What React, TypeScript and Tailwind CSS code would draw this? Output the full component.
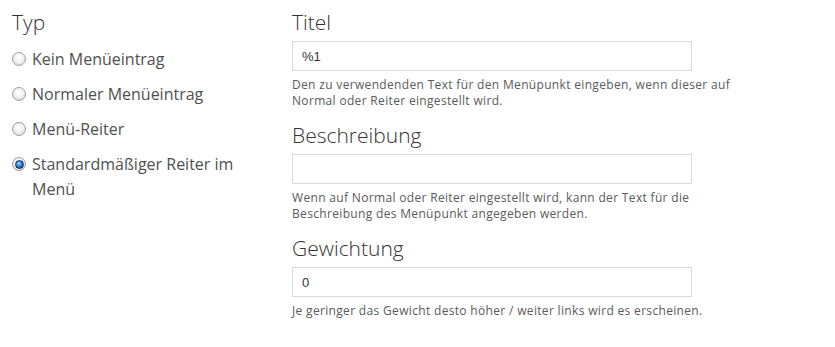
const TYPES = [
  { label: "Kein Menüeintrag", checked: false },
  { label: "Normaler Menüeintrag", checked: false },
  { label: "Menü-Reiter", checked: false },
  { label: "Standardmäßiger Reiter im Menü", checked: true },
];

const FIELDS = [
  {
    title: "Titel",
    value: "%1",
    help: ["Den zu verwendenden Text für den Menüpunkt eingeben, wenn dieser auf", "Normal oder Reiter eingestellt wird."],
  },
  {
    title: "Beschreibung",
    value: "",
    help: ["Wenn auf Normal oder Reiter eingestellt wird, kann der Text für die", "Beschreibung des Menüpunkt angegeben werden."],
  },
  {
    title: "Gewichtung",
    value: "0",
    help: ["Je geringer das Gewicht desto höher / weiter links wird es erscheinen."],
  },
];

function Radio({ checked }: { checked: boolean }) {
  return (
    <span className="mt-[5px] flex h-[14px] w-[14px] shrink-0 items-center justify-center rounded-full border border-[#a0a0a0] bg-[radial-gradient(circle_at_50%_40%,#ffffff_0%,#f2f2f2_45%,#cfcfcf_100%)]">
      {checked && (
        <span className="h-[9px] w-[9px] rounded-full border border-[#0b2a55] bg-[radial-gradient(circle_at_40%_35%,#9ad6ff_0%,#1f73d6_55%,#0a3a86_100%)]" />
      )}
    </span>
  );
}

export default function App() {
  return (
    <div className="flex min-h-[347px] w-[835px] bg-white font-['Open_Sans',sans-serif]">
      {/* Typ */}
      <div className="w-[280px] shrink-0 pl-[12px] pt-[7px]">
        <h2 className="text-[21px] font-light leading-[30px] text-[#333]">Typ</h2>
        <div className="mt-[10px] flex flex-col gap-[10px]">
          {TYPES.map((t) => (
            <label key={t.label} className="flex gap-[6px] text-[16px] leading-[25px] text-[#505050]">
              <Radio checked={t.checked} />
              <span className="w-[230px]">{t.label}</span>
            </label>
          ))}
        </div>
      </div>

      {/* Fields */}
      <div className="pl-[12px] pt-[7px]">
        {FIELDS.map((f) => (
          <div key={f.title} className="mb-[11px]">
            <h2 className="text-[21px] font-light leading-[30px] text-[#333]">{f.title}</h2>
            <input
              readOnly
              value={f.value}
              className="mt-[4px] block h-[30px] w-[400px] border border-[#d9d9d9] bg-white px-[9px] font-['Liberation_Sans',sans-serif] text-[13px] text-[#333] outline-none"
            />
            <p className="mt-[6px] text-[12px] leading-[16px] tracking-[0.33px] text-[#5a5a5a]">
              {f.help.map((h) => (
                <span key={h} className="block">{h}</span>
              ))}
            </p>
          </div>
        ))}
      </div>
    </div>
  );
}
